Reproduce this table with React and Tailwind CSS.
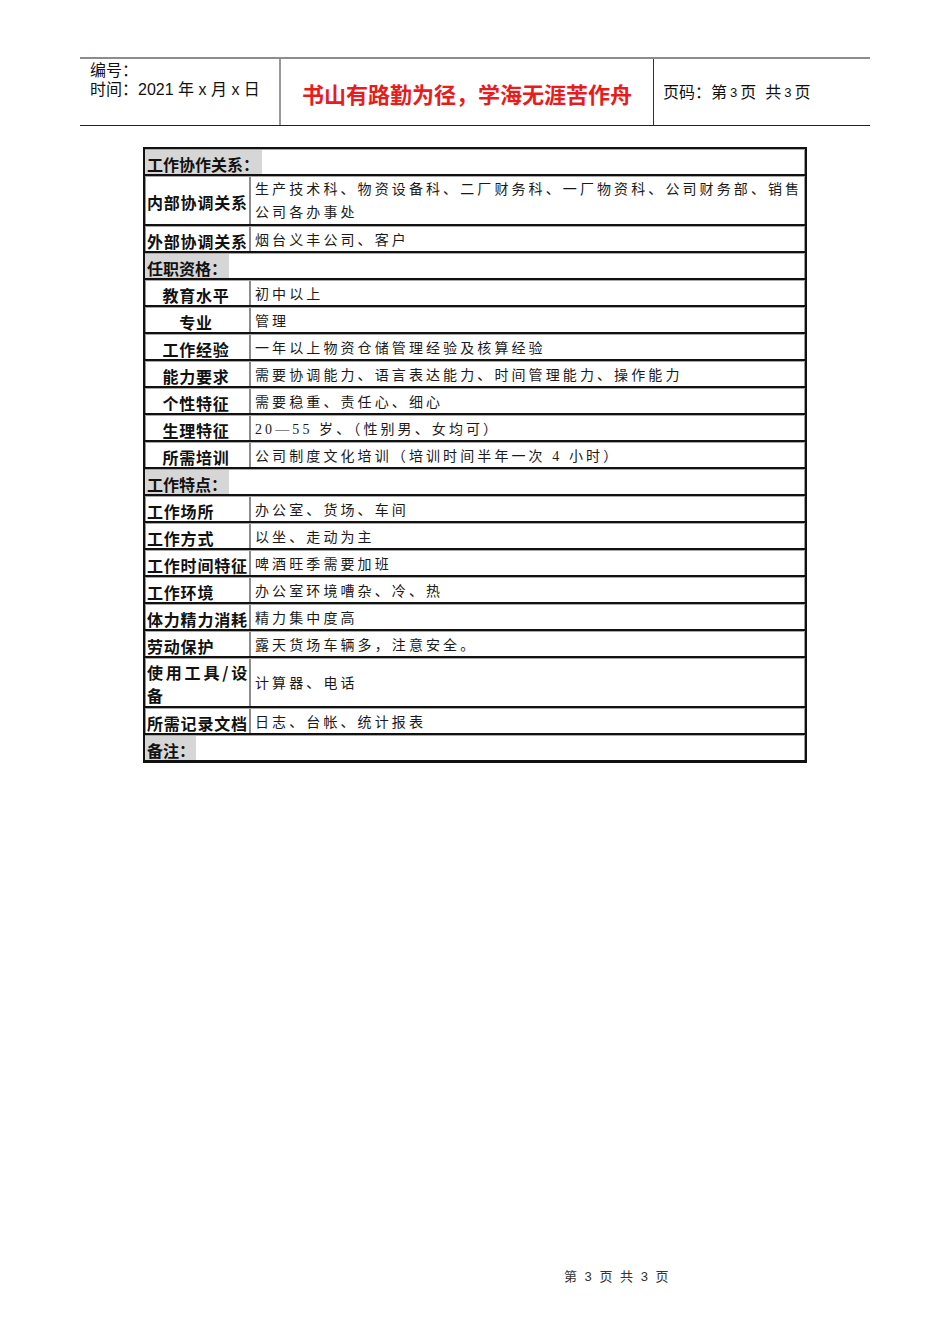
import React from "react";

const LABEL_FONT = { fontFamily: '"Noto Sans CJK SC", "Liberation Sans", sans-serif' };

function SectionRow({ title, bgW }) {
  return (
    <div className="flex h-[27px] border-t-2 border-[#111]">
      <div className="flex flex-1 border-t border-[#a8a8a8]">
        <div
          className={`flex items-center pl-[2px] pt-[4px] bg-[#d6d6d6] text-[16px] font-bold text-[#111] leading-none ${bgW}`}
        >
          {title}
        </div>
      </div>
    </div>
  );
}

function Row({ label, children, tall = false, centerLabel = false, labelNode = null, contentTop = false }) {
  return (
    <div className={`flex border-t-2 border-[#111] ${tall ? "h-[50px]" : "h-[27px]"}`}>
      <div className="flex flex-1 border-t border-[#a8a8a8]">
        <div
          className={`flex w-[106px] shrink-0 items-center border-r-2 border-[#8c8c8c] text-[16px] font-bold tracking-[0.8px] text-[#111] leading-none pt-[3px] ${
            centerLabel ? "justify-center pr-[2px]" : "justify-start pl-[2px]"
          }`}
        >
          {labelNode || label}
        </div>
        <div
          className={`flex flex-1 pl-[4px] text-[14px] tracking-[3.1px] text-[#1a1a1a] ${
            contentTop ? "flex-col justify-start pt-[1px] leading-[23px]" : "items-center pt-[3px] leading-none"
          }`}
          style={{ fontFamily: '"Liberation Serif", "Noto Sans CJK SC", serif' }}
        >
          {children}
        </div>
      </div>
    </div>
  );
}

export default function App() {
  return (
    <div className="w-[950px] min-h-[1344px] bg-white" style={LABEL_FONT}>
      <div className="h-[57px]" />
      {/* Header */}
      <div className="ml-[80px] flex h-[69px] w-[790px] border-t-2 border-b border-t-[#8c8c8c] border-b-[#222]">
        <div
          className="w-[201px] shrink-0 border-r-2 border-[#9a9a9a] pl-[10px] pt-[2px] text-[16px] leading-[19px] text-[#111]"
          style={{ fontFamily: '"Liberation Sans", "Noto Sans CJK SC", sans-serif' }}
        >
          <div>编号：</div>
          <div>时间：2021 年 x 月 x 日</div>
        </div>
        <div className="flex w-[373px] shrink-0 items-center justify-center border-r border-[#333] pt-[2px]">
          <span className="text-[22px] font-bold text-[#e81c1c] leading-none">书山有路勤为径，学海无涯苦作舟</span>
        </div>
        <div
          className="flex flex-1 items-center pl-[9px] pt-[2px] text-[16px] text-[#111]"
          style={{ fontFamily: '"Liberation Sans", "Noto Sans CJK SC", sans-serif' }}
        >
          页码：第<span className="text-[13px] px-[3px]">3</span>页&nbsp;&nbsp;共<span className="text-[13px] px-[3px]">3</span>页
        </div>
      </div>

      <div className="h-[21px]" />

      {/* Table */}
      <div className="ml-[143px] w-[664px] border-x-2 border-b-[3px] border-[#111] shadow-[inset_1px_0_0_#999,inset_-1px_0_0_#999]">
        <SectionRow title="工作协作关系：" bgW="w-[117px]" />
        <Row label="内部协调关系" tall contentTop>
          <div className="whitespace-nowrap">生产技术科、物资设备科、二厂财务科、一厂物资科、公司财务部、销售</div>
          <div className="whitespace-nowrap">公司各办事处</div>
        </Row>
        <Row label="外部协调关系">烟台义丰公司、客户</Row>

        <SectionRow title="任职资格：" bgW="w-[84px]" />
        <Row label="教育水平" centerLabel>初中以上</Row>
        <Row label="专业" centerLabel>管理</Row>
        <Row label="工作经验" centerLabel>一年以上物资仓储管理经验及核算经验</Row>
        <Row label="能力要求" centerLabel>需要协调能力、语言表达能力、时间管理能力、操作能力</Row>
        <Row label="个性特征" centerLabel>需要稳重、责任心、细心</Row>
        <Row label="生理特征" centerLabel>20—55 岁、（性别男、女均可）</Row>
        <Row label="所需培训" centerLabel>公司制度文化培训（培训时间半年一次 4 小时）</Row>

        <SectionRow title="工作特点：" bgW="w-[84px]" />
        <Row label="工作场所">办公室、货场、车间</Row>
        <Row label="工作方式">以坐、走动为主</Row>
        <Row label="工作时间特征">啤酒旺季需要加班</Row>
        <Row label="工作环境">办公室环境嘈杂、冷、热</Row>
        <Row label="体力精力消耗">精力集中度高</Row>
        <Row label="劳动保护">露天货场车辆多，注意安全。</Row>
        <Row
          tall
          labelNode={
            <div className="flex w-full flex-col pr-[1px] leading-[23px]">
              <div className="flex justify-between">
                <span>使</span>
                <span>用</span>
                <span>工</span>
                <span>具</span>
                <span>/</span>
                <span>设</span>
              </div>
              <div>备</div>
            </div>
          }
        >
          计算器、电话
        </Row>
        <Row label="所需记录文档">日志、台帐、统计报表</Row>
        <SectionRow title="备注：" bgW="w-[51px]" />
      </div>

      <div className="h-[507px]" />
      <div
        className="ml-[564px] text-[13px] tracking-[2px] text-[#333] leading-none"
        style={{ fontFamily: '"Liberation Sans", "Noto Sans CJK SC", sans-serif' }}
      >
        第 3 页 共 3 页
      </div>
    </div>
  );
}
